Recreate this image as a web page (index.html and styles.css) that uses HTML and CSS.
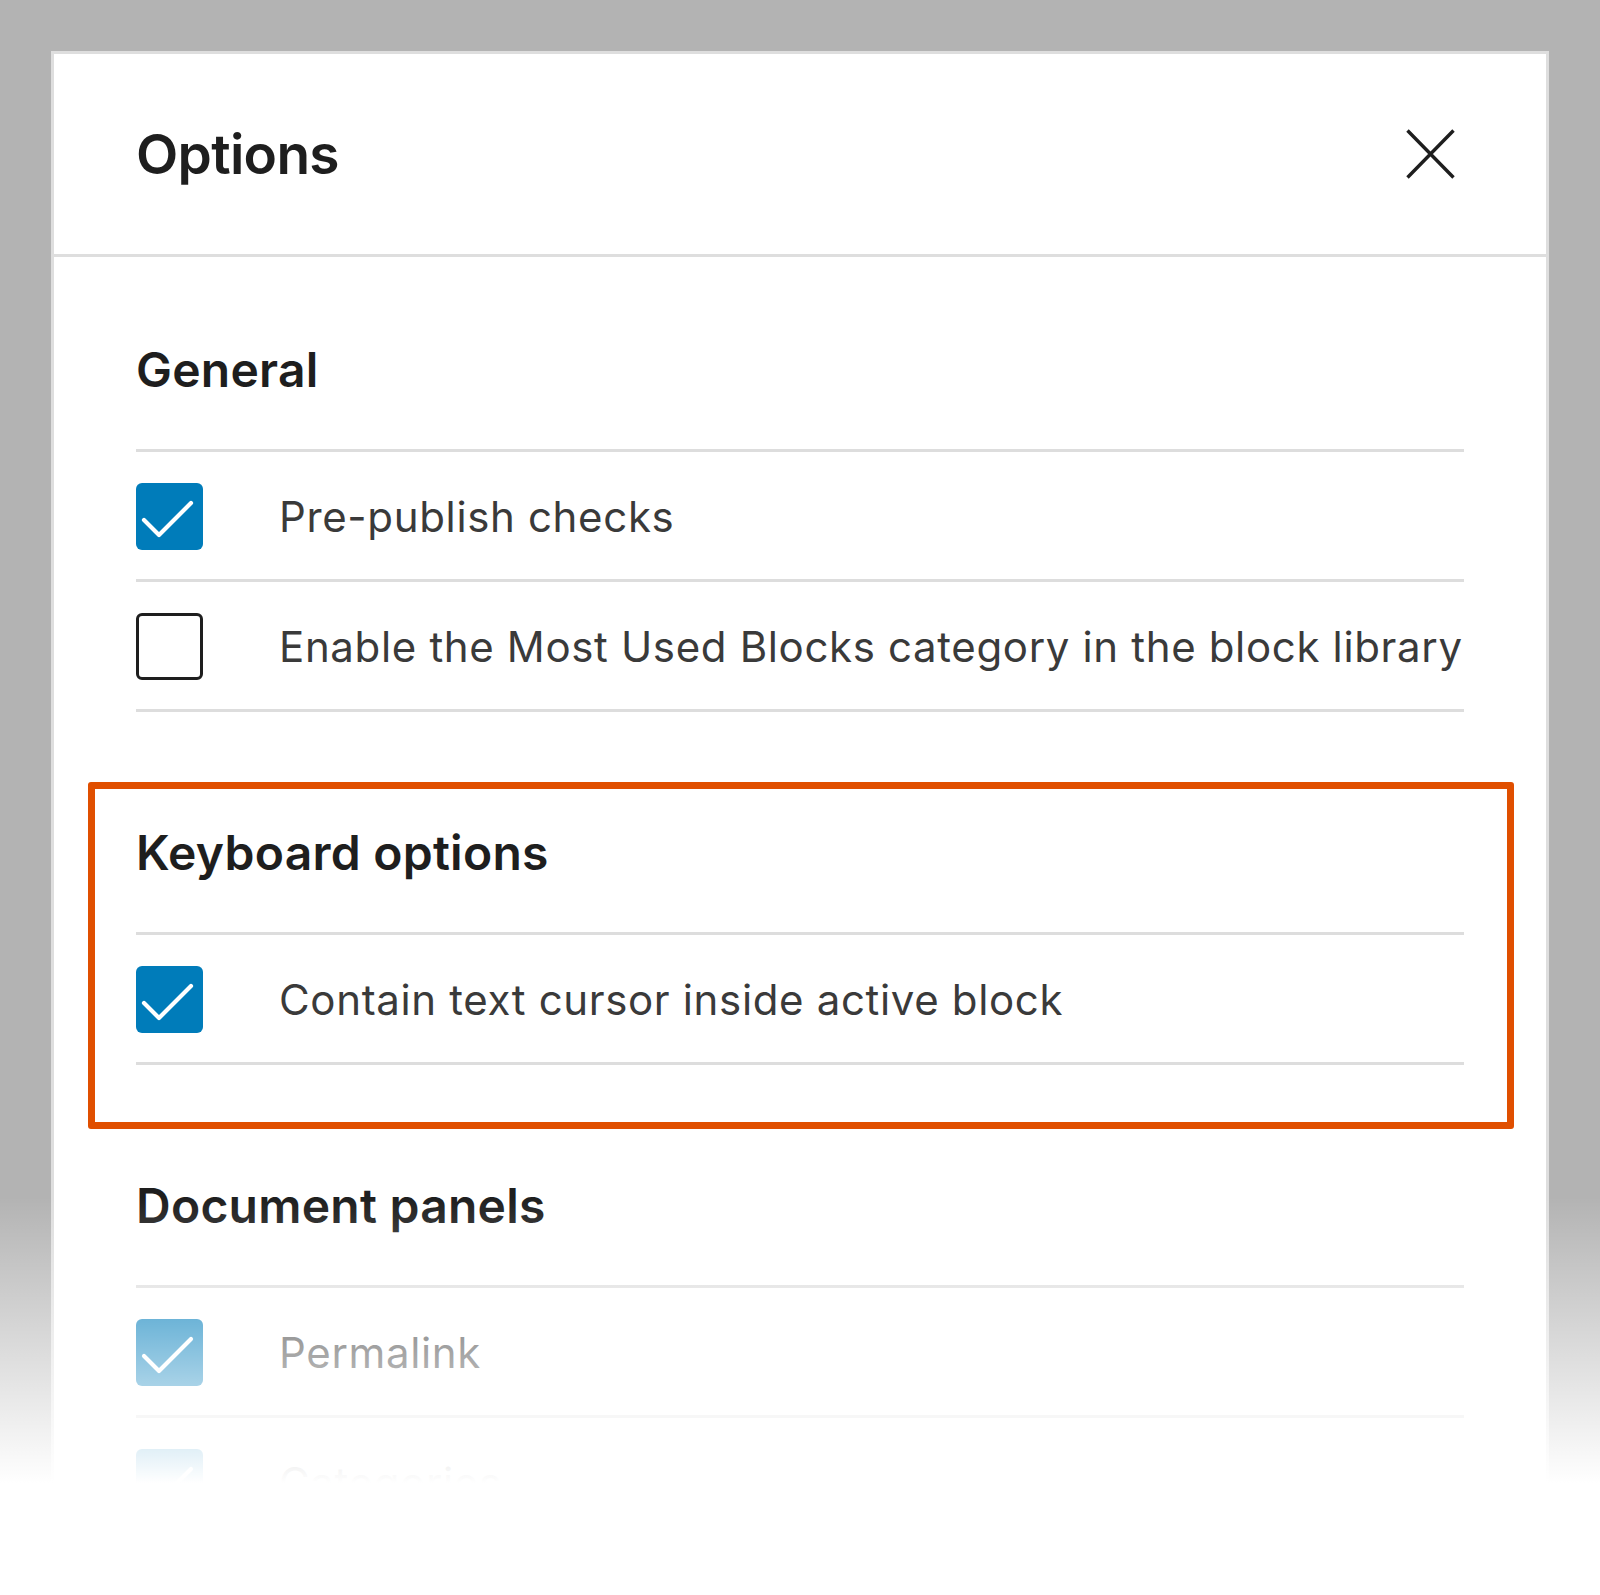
FILE: index.html
```html
<!DOCTYPE html>
<html lang="en">
<head>
<meta charset="utf-8">
<title>Options</title>
<link rel="stylesheet" href="styles.css">
</head>
<body>
<div class="modal">
  <div class="modal-header">
    <h1 class="modal-title">Options</h1>
    <button class="close-btn" aria-label="Close">
      <svg width="49" height="50" viewBox="0 0 49 50"><path d="M1.5 1.5L47.5 48.5M47.5 1.5L1.5 48.5" stroke="#1e1e1e" stroke-width="3.4" fill="none"/></svg>
    </button>
  </div>
  <div class="modal-body">
    <section class="section">
      <h2 class="section-title">General</h2>
      <div class="row">
        <span class="cb checked"><svg width="67" height="67" viewBox="0 0 67 67"><polyline points="8,37 23,52 55,20" fill="none" stroke="#fff" stroke-width="4.2" stroke-linecap="round" stroke-linejoin="round"/></svg></span>
        <span class="label">Pre-publish checks</span>
      </div>
      <div class="row">
        <span class="cb"></span>
        <span class="label">Enable the Most Used Blocks category in the block library</span>
      </div>
    </section>
    <section class="section">
      <div class="highlight"></div>
      <h2 class="section-title">Keyboard options</h2>
      <div class="row">
        <span class="cb checked"><svg width="67" height="67" viewBox="0 0 67 67"><polyline points="8,37 23,52 55,20" fill="none" stroke="#fff" stroke-width="4.2" stroke-linecap="round" stroke-linejoin="round"/></svg></span>
        <span class="label">Contain text cursor inside active block</span>
      </div>
    </section>
    <section class="section">
      <h2 class="section-title">Document panels</h2>
      <div class="row">
        <span class="cb checked"><svg width="67" height="67" viewBox="0 0 67 67"><polyline points="8,37 23,52 55,20" fill="none" stroke="#fff" stroke-width="4.2" stroke-linecap="round" stroke-linejoin="round"/></svg></span>
        <span class="label">Permalink</span>
      </div>
      <div class="row">
        <span class="cb checked"><svg width="67" height="67" viewBox="0 0 67 67"><polyline points="8,37 23,52 55,20" fill="none" stroke="#fff" stroke-width="4.2" stroke-linecap="round" stroke-linejoin="round"/></svg></span>
        <span class="label">Categories</span>
      </div>
    </section>
  </div>
</div>
<div class="fade"></div>
</body>
</html>
```
FILE: styles.css
```css
html, body {
  margin: 0;
  padding: 0;
}
body {
  width: 1600px;
  height: 1595px;
  overflow: hidden;
  background: #b3b3b3;
  font-family: Inter, "Noto Sans", sans-serif;
  position: relative;
}
.modal {
  box-sizing: border-box;
  margin: 51px 0 0 51px;
  width: 1498px;
  height: 1544px;
  background: #fff;
  border: 3px solid #dedede;
  border-bottom: none;
  overflow: hidden;
}
.modal-header {
  height: 200px;
  border-bottom: 3px solid #dedede;
  display: flex;
  align-items: center;
  justify-content: space-between;
  padding: 0 91px 0 82px;
}
.modal-title {
  margin: 0;
  font-size: 55px;
  line-height: 60px;
  font-weight: 600;
  color: #1e1e1e;
  letter-spacing: -0.7px;
}
.close-btn {
  border: none;
  background: none;
  padding: 0;
  margin: 0;
  width: 49px;
  height: 50px;
  display: block;
}
.close-btn svg {
  display: block;
}
.modal-body {
  padding: 89px 82px 0;
}
.section {
  position: relative;
}
.section + .section {
  margin-top: 117px;
}
.section-title {
  margin: 0 0 55px;
  font-size: 48px;
  line-height: 48px;
  font-weight: 600;
  color: #1e1e1e;
  letter-spacing: 0.25px;
}
.row {
  display: flex;
  align-items: center;
  border-top: 3px solid #dddddd;
  padding: 31px 0 29px;
}
.row:last-child {
  border-bottom: 3px solid #dddddd;
}
.cb {
  box-sizing: border-box;
  flex: none;
  width: 67px;
  height: 67px;
  border-radius: 6px;
  border: 3px solid #1e1e1e;
  background: #fff;
  display: block;
}
.cb.checked {
  border: none;
  background: #007cba;
}
.cb svg {
  display: block;
}
.label {
  margin-left: 76px;
  font-size: 42px;
  line-height: 50px;
  color: #3a3a3a;
  letter-spacing: 0.65px;
  white-space: nowrap;
}
.highlight {
  position: absolute;
  top: -47px;
  left: -48px;
  right: -50px;
  bottom: -64px;
  border: 7px solid #e04f00;
  border-radius: 3px;
  pointer-events: none;
}
.fade {
  position: absolute;
  left: 0;
  right: 0;
  top: 1197px;
  bottom: 0;
  background: linear-gradient(to bottom, rgba(255,255,255,0) 0, #fff 286px, #fff 100%);
}
```
